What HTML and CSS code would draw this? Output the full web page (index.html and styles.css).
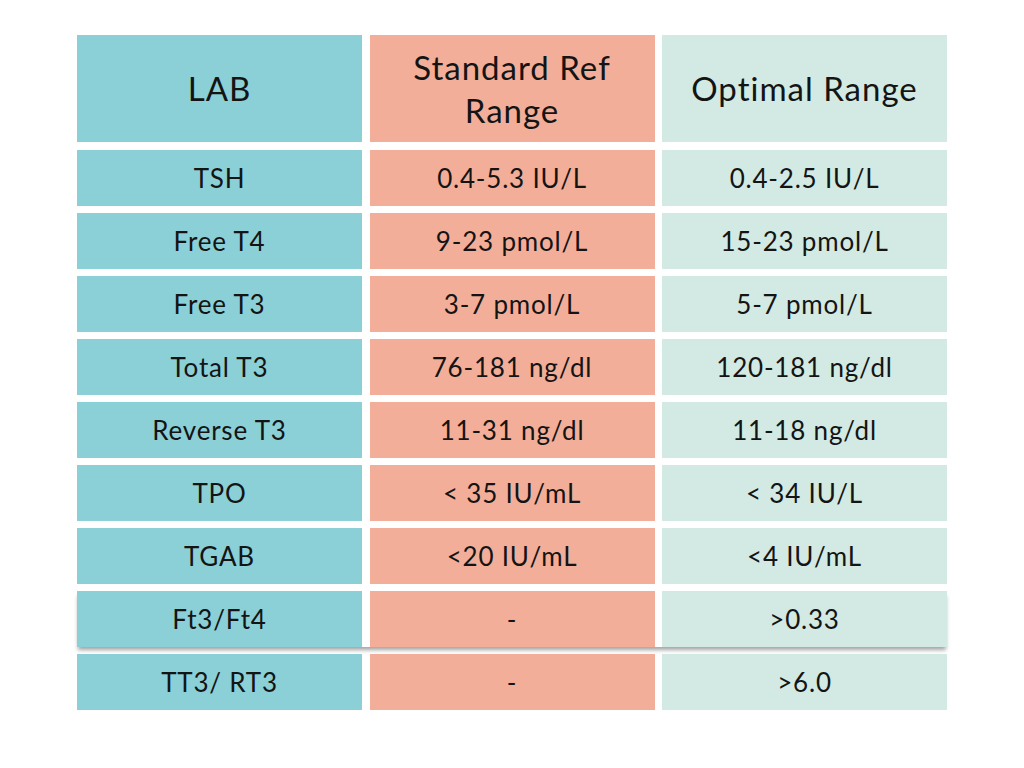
FILE: index.html
```html
<!DOCTYPE html>
<html>
<head>
<meta charset="utf-8">
<link rel="stylesheet" href="styles.css">
</head>
<body>
<div class="table">
  <div class="row head">
    <div class="cell lab">LAB</div>
    <div class="cell std">Standard Ref<br>Range</div>
    <div class="cell opt">Optimal Range</div>
  </div>
  <div class="row"><div class="cell lab">TSH</div><div class="cell std">0.4-5.3 IU/L</div><div class="cell opt">0.4-2.5 IU/L</div></div>
  <div class="row"><div class="cell lab">Free T4</div><div class="cell std">9-23 pmol/L</div><div class="cell opt">15-23 pmol/L</div></div>
  <div class="row"><div class="cell lab">Free T3</div><div class="cell std">3-7 pmol/L</div><div class="cell opt">5-7 pmol/L</div></div>
  <div class="row"><div class="cell lab">Total T3</div><div class="cell std">76-181 ng/dl</div><div class="cell opt">120-181 ng/dl</div></div>
  <div class="row"><div class="cell lab">Reverse T3</div><div class="cell std">11-31 ng/dl</div><div class="cell opt">11-18 ng/dl</div></div>
  <div class="row"><div class="cell lab">TPO</div><div class="cell std">&lt; 35 IU/mL</div><div class="cell opt">&lt; 34 IU/L</div></div>
  <div class="row"><div class="cell lab">TGAB</div><div class="cell std">&lt;20 IU/mL</div><div class="cell opt">&lt;4 IU/mL</div></div>
  <div class="row shadow"><div class="cell lab">Ft3/Ft4</div><div class="cell std">-</div><div class="cell opt">&gt;0.33</div></div>
  <div class="row"><div class="cell lab">TT3/ RT3</div><div class="cell std">-</div><div class="cell opt">&gt;6.0</div></div>
</div>
</body>
</html>
```
FILE: styles.css
```css
html, body {
  margin: 0;
  padding: 0;
  background: #ffffff;
}
body {
  width: 1024px;
  height: 768px;
  font-family: Lato, "Open Sans", sans-serif;
  color: #141414;
}
.table {
  padding: 35px 0 0 77px;
  width: 870px;
  display: flex;
  flex-direction: column;
  gap: 7.5px;
}
.row {
  display: grid;
  grid-template-columns: 285px 285px 285px;
  column-gap: 7.5px;
  height: 55.5px;
}
.row.head {
  height: 107px;
  margin-bottom: 0.5px;
}
.row.shadow {
  box-shadow: 0 4px 4px -1px rgba(0, 0, 0, 0.36);
}
.cell {
  display: flex;
  align-items: center;
  justify-content: center;
  text-align: center;
  font-size: 26px;
  letter-spacing: 0.8px;
  line-height: 1;
}
.head .cell {
  font-size: 33px;
  letter-spacing: 1px;
  line-height: 43px;
}
.lab { background: #8ad0d6; }
.std { background: #f2ae98; }
.opt { background: #d2eae3; }
```
